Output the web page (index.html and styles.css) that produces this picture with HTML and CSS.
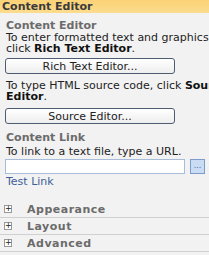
FILE: index.html
```html
<!DOCTYPE html>
<html lang="en">
<head>
  <meta charset="UTF-8">
  <title>Content Editor</title>
  <link rel="stylesheet" href="styles.css">
</head>
<body>
  <div class="toolpane">
    <div class="pane-title">Content Editor</div>
    <div class="pane-body">
      <div class="section">
        <div class="section-title">Content Editor</div>
        <div class="desc">To enter formatted text and graphics, click <b>Rich Text Editor</b>.</div>
        <button class="btn">Rich Text Editor...</button>
        <div class="desc">To type HTML source code, click <b>Source Editor</b>.</div>
        <button class="btn">Source Editor...</button>
      </div>
      <div class="section">
        <div class="section-title">Content Link</div>
        <div class="desc">To link to a text file, type a URL.</div>
        <div class="link-row">
          <input class="url" type="text">
          <span class="browse">...</span>
        </div>
        <a class="test-link" href="#">Test Link</a>
      </div>
    </div>
    <div class="group first"><span class="plus">+</span><span class="group-name">Appearance</span></div>
    <div class="group"><span class="plus">+</span><span class="group-name">Layout</span></div>
    <div class="group"><span class="plus">+</span><span class="group-name">Advanced</span></div>
  </div>
</body>
</html>
```

FILE: styles.css
```css
body {
  margin: 0;
  background: #f2f2f2;
  font-family: "DejaVu Sans", Verdana, sans-serif;
  font-size: 11px;
  color: #222;
}
.toolpane {
  width: 209px;
  height: 255px;
  overflow: hidden;
}
.pane-title {
  height: 13px;
  line-height: 13px;
  padding-left: 2px;
  background: linear-gradient(#fbd276, #fcdc8e);
  font-weight: bold;
  color: #3a3a3a;
}
.pane-body {
  padding: 7px 0 0 6px;
}
.section-title {
  font-weight: bold;
  color: #6b6b6b;
  line-height: 12px;
}
.desc {
  width: 232px;
  line-height: 11px;
}
.desc b {
  color: #111;
}
.btn {
  display: block;
  width: 170px;
  height: 16px;
  margin: 4px 0 6px -1px;
  padding: 0;
  font-family: inherit;
  font-size: 11px;
  color: #222;
  background: linear-gradient(#ffffff, #eeeeee);
  border: 1px solid #4f5d73;
  border-radius: 3px;
}
.btn + .desc + .btn {
  margin: 6px 0 8px -1px;
}
.section + .section {
  margin-top: 4px;
}
.section + .section .section-title {
  margin-bottom: 2px;
}
.link-row {
  display: flex;
  gap: 5px;
  margin-top: 2px;
}
.url {
  width: 180px;
  height: 15px;
  box-sizing: border-box;
  margin: 0 0 0 -1px;
  border: 1px solid #a7bcd8;
  background: #fff;
}
.browse {
  width: 15px;
  height: 15px;
  box-sizing: border-box;
  border: 1px solid #7d9bcb;
  background: #c9dcf4;
  color: #4a6aa0;
  font-size: 8px;
  line-height: 11px;
  text-align: center;
}
.test-link {
  display: block;
  color: #3d5e98;
  text-decoration: none;
  line-height: 11px;
  margin-top: 2px;
}
.group {
  display: flex;
  align-items: center;
  height: 16px;
  border-bottom: 1px solid #d0d0d0;
}
.group.first {
  margin-top: 14px;
}
.plus {
  width: 6px;
  height: 6px;
  margin-left: 4px;
  border: 1px solid #999;
  background: #fff;
  font-size: 8px;
  line-height: 6px;
  text-align: center;
  color: #222;
}
.group-name {
  margin-left: 15px;
  font-weight: bold;
  color: #6b6b6b;
  letter-spacing: 0.5px;
}
```
